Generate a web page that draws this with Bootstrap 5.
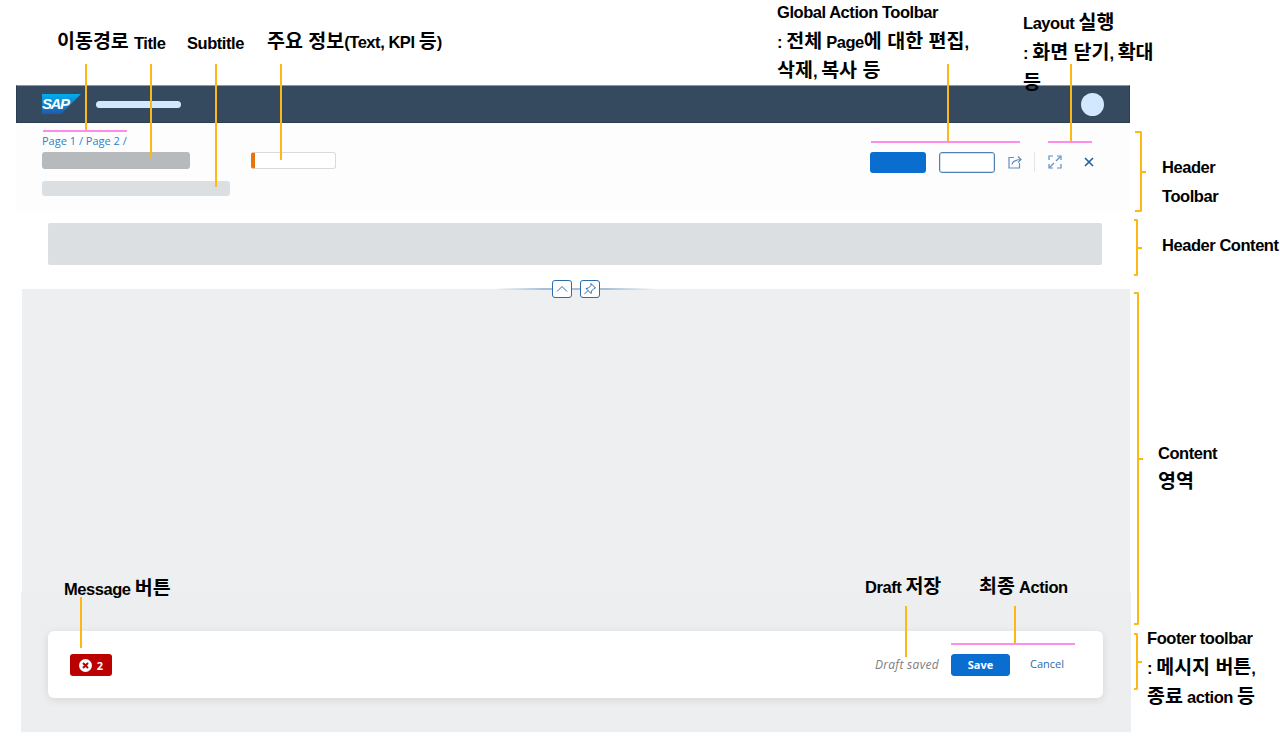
<!DOCTYPE html>
<html lang="ko">
<head>
  <meta charset="UTF-8" />
  <meta name="viewport" content="width=device-width, initial-scale=1" />
  <title>Object Page 구성</title>
  <link href="https://cdn.jsdelivr.net/npm/bootstrap@5.3.0/dist/css/bootstrap.min.css" rel="stylesheet" />
  <style>
    body { background: #fff; height: 738px; overflow: hidden; position: relative; font-family: "Liberation Sans", "Noto Sans CJK KR", sans-serif; }

    /* page frame */
    .frame { width: 1114px; margin: 85px 0 0 16px; }
    .shell-bar { height: 38px; background: #354a5f; border: 1px solid #2b3d50; border-top-color: #8b98a5; padding: 0 25px; }
    .sap-logo { width: 39px; height: 20px; }
    .sap-logo text { font: italic 700 15px "Liberation Sans", sans-serif; fill: #fff; }
    .shell-pill { width: 85px; height: 7px; border-radius: 4px; background: #d1e8ff; margin-left: 15px; }
    .shell-avatar { width: 23px; height: 23px; border-radius: 50%; background: #d1e8ff; margin-left: auto; margin-right: 0; }

    .head-toolbar { height: 89px; padding: 11px 36px 0 26px; background: #fdfdfd; }
    .crumbs { font: 11px/13px "Open Sans", sans-serif; color: #2f80cc; margin-bottom: 2px; height: 16px; }
    .title-row { gap: 61px; }
    .title-bar { width: 148px; height: 17px; background: #b6babd; border-radius: 3px; }
    .kpi-box { width: 85px; height: 17px; background: #fff; border: 1px solid #d9dadb; border-left: 4px solid #e9730c; border-radius: 3px; }
    .subtitle-bar { width: 188px; height: 15px; background: #dcdfe2; border-radius: 3px; margin-top: 12px; }
    .act-row { margin-top: 18px; }
    .act-main { width: 56px; height: 21px; background: #0a6ed1; border-radius: 3px; }
    .act-ghost { width: 56px; height: 21px; background: #fff; border: 1px solid #4f80b0; box-shadow: inset 0 0 0 1px #d5e1ec; border-radius: 3px; margin-left: 13px; }
    .act-icon { width: 14px; height: 14px; margin-top: 3px; fill: none; stroke: #5f8fc0; stroke-width: 1.2; }
    .act-share { margin-left: 13px; }
    .act-sep { width: 1px; height: 20px; background: #e4e6e8; margin: 0 13px 0 12px; }
    .act-close { stroke: #1d5f9f; stroke-width: 1.6; width: 10px; height: 10px; margin: 5px 0 0 22px; }

    .head-content { height: 77px; padding: 11px 28px 0 32px; background: #fff; }
    .head-slot { height: 42px; background: #dcdfe2; border-radius: 2px; }

    .body-area { position: relative; height: 303px; margin-left: 6px; background: #edeff1; }
    .fold-line { position: absolute; left: 473px; top: -1px; width: 160px; height: 2px; background: linear-gradient(90deg, transparent, #a9bfd8 30%, #a9bfd8 70%, transparent); }
    .fold-btn { position: absolute; top: -9px; width: 20px; height: 18px; background: #fff; border: 1px solid #2d6ca8; border-radius: 3px; }
    .fold-up { left: 530px; }
    .fold-pin { left: 558px; }
    .fold-btn svg { display: block; width: 18px; height: 16px; fill: none; stroke: #2d6ca8; stroke-width: 1; }

    .foot-area { height: 140px; margin-left: 5px; margin-right: -1px; padding: 39px 28px 0 27px; background: #eceef0; }
    .foot-card { height: 67px; padding: 23px 39px 0 22px; background: #fff; border-radius: 6px; box-shadow: 0 2px 8px rgba(0, 0, 0, .1); }
    .err-btn { width: 42px; height: 22px; background: #bb0000; border-radius: 3px; color: #fff; font: 700 11px "Open Sans", sans-serif; gap: 5px; }
    .err-btn svg { width: 13px; height: 13px; }
    .draft-note { font: italic 12px "Open Sans", sans-serif; letter-spacing: .3px; color: #7b7e81; margin: 2px 12px 0 auto; }
    .save-btn { --bs-btn-padding-x: 0; --bs-btn-padding-y: 0; --bs-btn-font-size: 11px; --bs-btn-border-radius: 3px; width: 59px; height: 22px; background: #0a6ed1; border-color: #0a6ed1; font-weight: 700; font-family: "Open Sans", sans-serif; }
    .cancel-link { font: 11px "Open Sans", sans-serif; color: #2a6bab; text-decoration: none; margin: 2px 0 0 20px; }

    /* annotations over the page */
    .note { position: absolute; margin: 0; white-space: nowrap; font-weight: 700; font-size: 16.5px; letter-spacing: -.45px; line-height: 20px; color: #000; }
    .ko { font-size: 19.5px; letter-spacing: 0; line-height: 1; }
    .n-crumb { left: 57px; top: 32px; }
    .n-title { left: 134px; top: 33px; }
    .n-sub { left: 187px; top: 33px; }
    .n-kpi { left: 267px; top: 32px; }
    .n-global { left: 777px; top: -2px; line-height: 29.5px; }
    .n-layout { left: 1023px; top: 8px; line-height: 30px; }
    .n-htool { left: 1162px; top: 153px; line-height: 29px; }
    .n-hcont { left: 1162px; top: 235px; }
    .n-cont { left: 1158px; top: 439px; line-height: 29px; }
    .n-msg { left: 64px; top: 579px; }
    .n-draft { left: 865px; top: 577px; }
    .n-final { left: 979px; top: 577px; }
    .n-foot { left: 1147px; top: 624px; line-height: 29.5px; }

    .lead-y { position: absolute; width: 2px; background: #fdb913; }
    .ly-1 { left: 85px; top: 64px; height: 66px; }
    .ly-2 { left: 150px; top: 64px; height: 94px; }
    .ly-3 { left: 215px; top: 64px; height: 123px; }
    .ly-4 { left: 280px; top: 64px; height: 96px; }
    .ly-5 { left: 947px; top: 64px; height: 78px; }
    .ly-6 { left: 1070px; top: 64px; height: 78px; }
    .ly-7 { left: 80px; top: 597px; height: 51px; }
    .ly-8 { left: 905px; top: 606px; height: 51px; }
    .ly-9 { left: 1014px; top: 606px; height: 38px; }

    .lead-p { position: absolute; height: 2px; background: #ff8ce8; }
    .lp-1 { left: 43px; top: 130px; width: 84px; }
    .lp-2 { left: 871px; top: 141px; width: 149px; }
    .lp-3 { left: 1048px; top: 141px; width: 44px; }
    .lp-4 { left: 951px; top: 643px; width: 124px; }

    .brace { position: absolute; border: 2px solid #fdb913; border-left: 0; border-radius: 0 2px 2px 0; }
    .brace::after { content: ""; position: absolute; left: 100%; top: 50%; width: 6px; height: 2px; margin-top: -1px; background: #fdb913; }
    .b-tool { left: 1135px; top: 131px; width: 7px; height: 81px; }
    .b-cont { left: 1134px; top: 219px; width: 4px; height: 57px; }
    .b-body { left: 1134px; top: 292px; width: 5px; height: 333px; }
    .b-foot { left: 1134px; top: 633px; width: 4px; height: 57px; }
  </style>
</head>
<body>
  <div class="frame">
    <div class="shell-bar d-flex align-items-center">
      <svg class="sap-logo" viewBox="0 0 39 20">
        <defs>
          <linearGradient id="sapBlue" x1="0" y1="0" x2="0" y2="1">
            <stop offset="0" stop-color="#00aeef" />
            <stop offset="1" stop-color="#1f5ab0" />
          </linearGradient>
        </defs>
        <polygon points="0,0 39,0 19,20 0,20" fill="url(#sapBlue)" />
        <text x="0" y="15" textLength="28">SAP</text>
      </svg>
      <div class="shell-pill"></div>
      <div class="shell-avatar"></div>
    </div>

    <div class="head-toolbar d-flex justify-content-between">
      <div>
        <div class="crumbs">Page 1 / Page 2 /</div>
        <div class="title-row d-flex">
          <div class="title-bar"></div>
          <div class="kpi-box"></div>
        </div>
        <div class="subtitle-bar"></div>
      </div>
      <div class="act-row d-flex align-items-start">
        <div class="act-main"></div>
        <div class="act-ghost"></div>
        <svg class="act-icon act-share" viewBox="0 0 14 14">
          <path d="M6 2.500H1v10.500h10.500V8" />
          <path d="M4 9.500C4.500 6.500 7 5 12.500 4.500M10 1.500l3 3-3 3" />
        </svg>
        <div class="act-sep"></div>
        <svg class="act-icon" viewBox="0 0 14 14">
          <path d="M1 5V1h4M9 1h4v4M1 9v4h4M9 13h4V9" />
          <path d="M8 6l4.500-4.500M6 8l-4.500 4.500" />
        </svg>
        <svg class="act-icon act-close" viewBox="0 0 10 10">
          <path d="M1 1l8 8M9 1l-8 8" />
        </svg>
      </div>
    </div>

    <div class="head-content">
      <div class="head-slot"></div>
    </div>

    <div class="body-area">
      <div class="fold-line"></div>
      <div class="fold-btn fold-up">
        <svg viewBox="0 0 18 16"><path d="M4 10.500l5-5 5 5" /></svg>
      </div>
      <div class="fold-btn fold-pin">
        <svg viewBox="0 0 18 16">
          <path d="M10 2.500l4.500 4.500-1.500.5-2.500 2.500-.5 2.500-5-5 2.500-.5 2.500-2.500z" />
          <path d="M7 9.500L3.500 13" />
        </svg>
      </div>
    </div>

    <div class="foot-area">
      <div class="foot-card d-flex align-items-start">
        <div class="err-btn d-flex align-items-center justify-content-center">
          <svg viewBox="0 0 13 13">
            <circle cx="6.500" cy="6.500" r="6.500" fill="#fff" />
            <path d="M4 4l5 5M9 4l-5 5" stroke="#bb0000" stroke-width="2" />
          </svg>
          <span>2</span>
        </div>
        <span class="draft-note">Draft saved</span>
        <button type="button" class="btn btn-primary save-btn">Save</button>
        <a class="cancel-link" href="#">Cancel</a>
      </div>
    </div>
  </div>

  <p class="note n-crumb"><span class="ko">이동경로</span></p>
  <p class="note n-title">Title</p>
  <p class="note n-sub">Subtitle</p>
  <p class="note n-kpi"><span class="ko">주요 정보</span>(Text, KPI <span class="ko">등</span>)</p>
  <p class="note n-global">Global Action Toolbar<br>: <span class="ko">전체</span> Page<span class="ko">에 대한 편집</span>,<br><span class="ko">삭제</span>, <span class="ko">복사 등</span></p>
  <p class="note n-layout">Layout <span class="ko">실행</span><br>: <span class="ko">화면 닫기</span>, <span class="ko">확대</span><br><span class="ko">등</span></p>
  <p class="note n-htool">Header<br>Toolbar</p>
  <p class="note n-hcont">Header Content</p>
  <p class="note n-cont">Content<br><span class="ko">영역</span></p>
  <p class="note n-msg">Message <span class="ko">버튼</span></p>
  <p class="note n-draft">Draft <span class="ko">저장</span></p>
  <p class="note n-final"><span class="ko">최종</span> Action</p>
  <p class="note n-foot">Footer toolbar<br>: <span class="ko">메시지 버튼</span>,<br><span class="ko">종료</span> action <span class="ko">등</span></p>

  <div class="lead-p lp-1"></div>
  <div class="lead-p lp-2"></div>
  <div class="lead-p lp-3"></div>
  <div class="lead-p lp-4"></div>

  <div class="lead-y ly-1"></div>
  <div class="lead-y ly-2"></div>
  <div class="lead-y ly-3"></div>
  <div class="lead-y ly-4"></div>
  <div class="lead-y ly-5"></div>
  <div class="lead-y ly-6"></div>
  <div class="lead-y ly-7"></div>
  <div class="lead-y ly-8"></div>
  <div class="lead-y ly-9"></div>

  <div class="brace b-tool"></div>
  <div class="brace b-cont"></div>
  <div class="brace b-body"></div>
  <div class="brace b-foot"></div>

  <script src="https://cdn.jsdelivr.net/npm/bootstrap@5.3.0/dist/js/bootstrap.bundle.min.js"></script>
</body>
</html>
